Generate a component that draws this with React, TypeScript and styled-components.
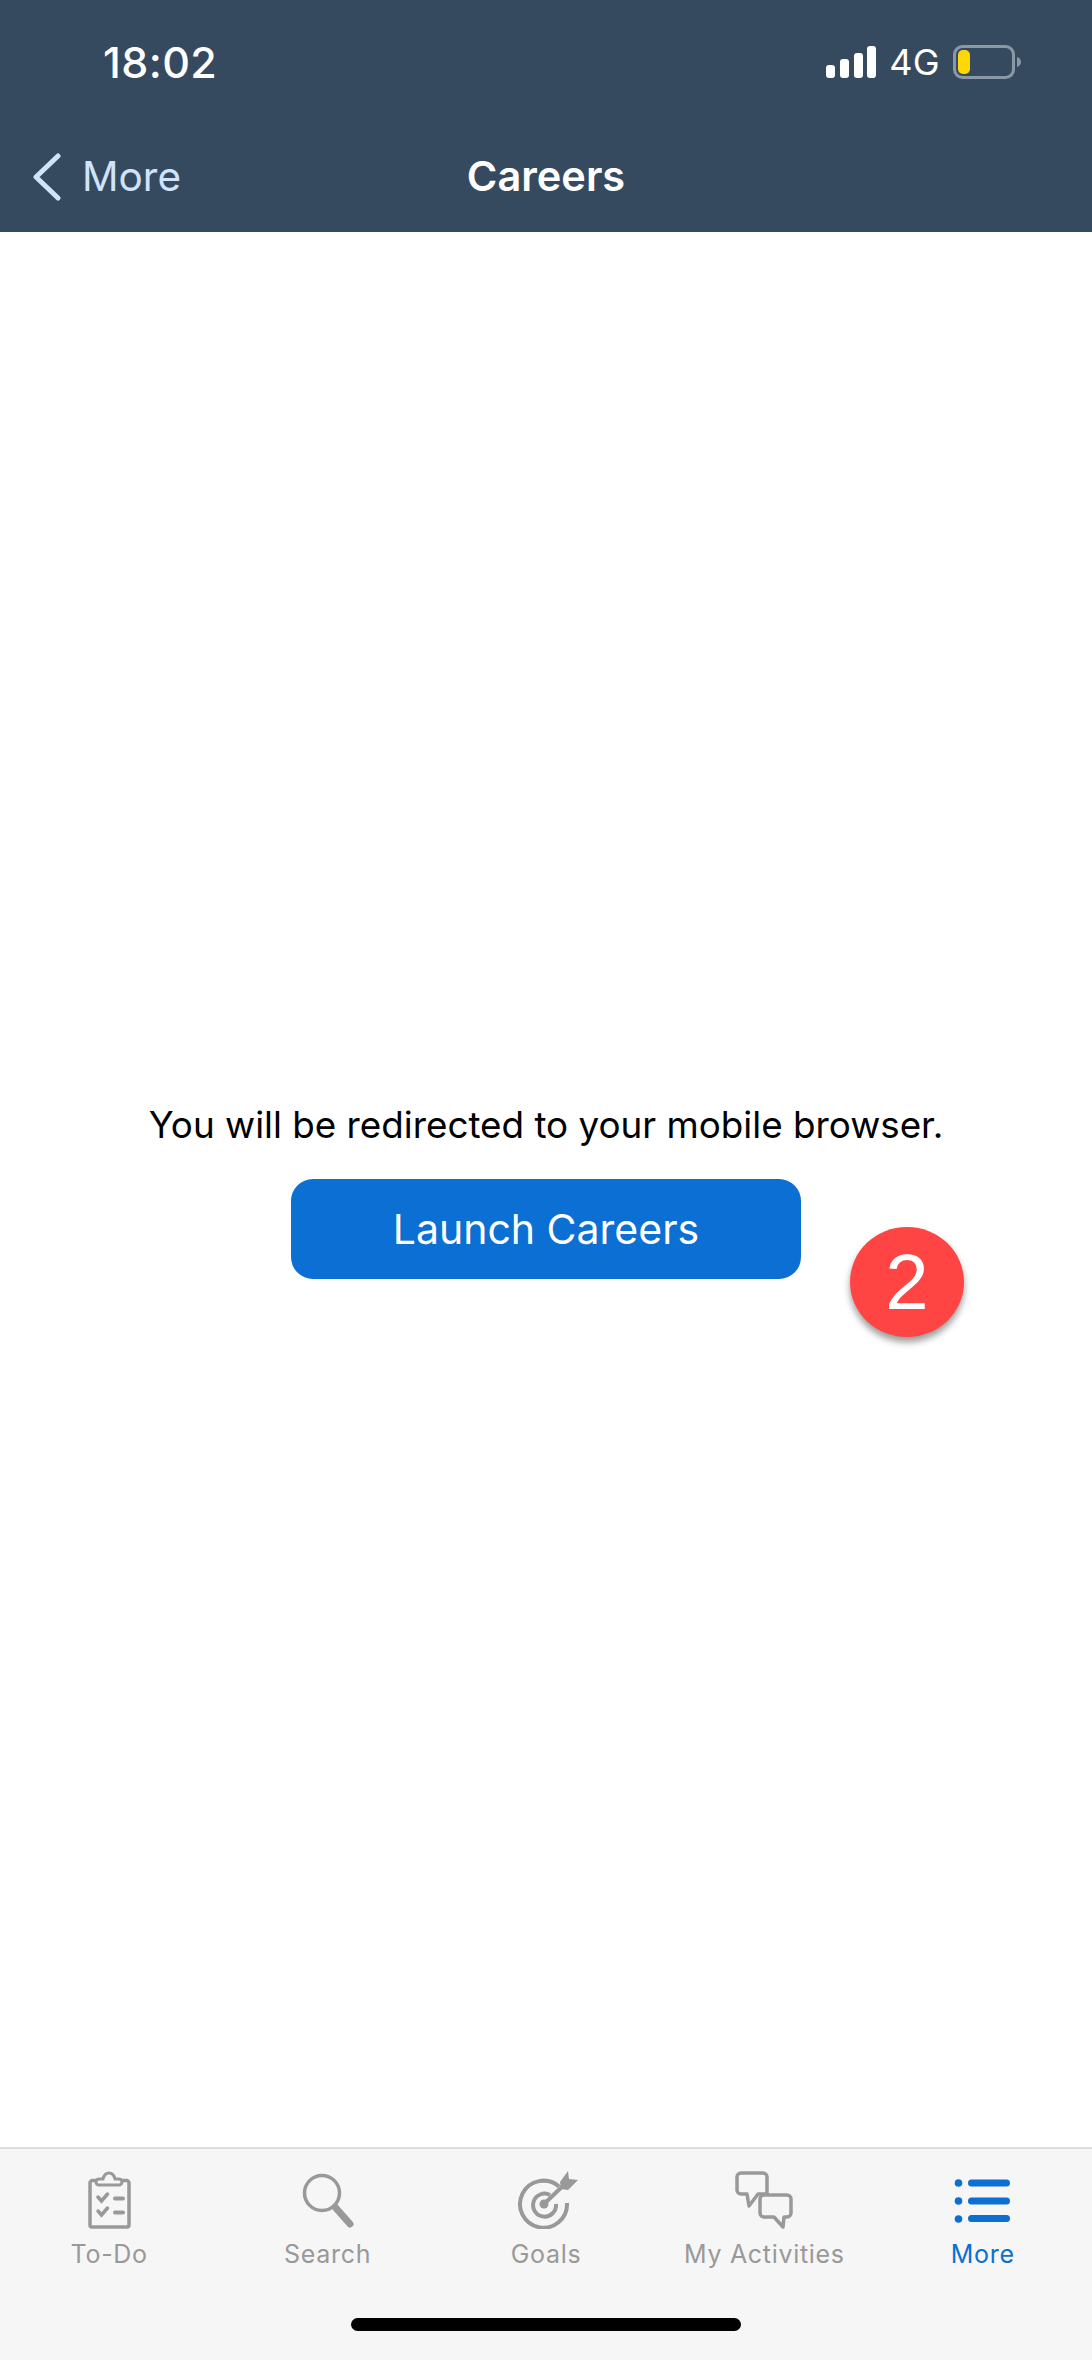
import {createGlobalStyle, styled} from "styled-components";

const GlobalStyle = createGlobalStyle`
    html, body {
        margin: 0;
        padding: 0;
        background: #fff;
    }
    * {
        box-sizing: border-box;
    }
`

const Screen = styled.div`
    display: flex;
    flex-direction: column;
    width: 1092px;
    height: 2360px;
    overflow: hidden;
    font-family: Inter, "Liberation Sans", sans-serif;
`

//header start
const Header = styled.header`
    display: flex;
    flex-direction: column;
    height: 232px;
    background-color: #364a5f;
    color: #fff;
`
const StatusBar = styled.div`
    display: flex;
    align-items: center;
    justify-content: space-between;
    height: 62px;
    margin-top: 31px;
    padding: 0 71px 0 103px;
`
const Clock = styled.span`
    font-size: 43px;
    font-weight: 500;
    line-height: 1;
    letter-spacing: 0.4px;
`
const StatusIcons = styled.div`
    display: flex;
    align-items: center;
    gap: 13px;
`
const Network = styled.span`
    font-size: 36px;
    line-height: 1;
    letter-spacing: 0.3px;
`
const NavBar = styled.nav`
    display: grid;
    grid-template-columns: 1fr auto 1fr;
    align-items: center;
    height: 64px;
    margin-top: 52px;
`
const BackLink = styled.div`
    display: flex;
    align-items: center;
    gap: 21px;
    padding-left: 32px;
    color: #cfe3fb;
    font-size: 40.5px;
    line-height: 1;
`
const Title = styled.h1`
    margin: 0;
    font-size: 41.5px;
    font-weight: 600;
    line-height: 1;
`
//header end

const Main = styled.main`
    flex: 1;
    display: flex;
    flex-direction: column;
    align-items: center;
    justify-content: center;
    padding-top: 1px;
`
const Message = styled.p`
    margin: 0 0 31px 0;
    color: #000;
    font-size: 36.8px;
    line-height: 46px;
`
const ButtonWrap = styled.div`
    position: relative;
`
const LaunchButton = styled.button`
    display: block;
    width: 510px;
    height: 100px;
    border: 0;
    border-radius: 22px;
    background-color: #0b6fd3;
    color: #fff;
    font-family: inherit;
    font-size: 41px;
`
const Badge = styled.div`
    position: absolute;
    left: 559px;
    top: 48px;
    display: flex;
    align-items: center;
    justify-content: center;
    width: 114px;
    height: 110px;
    border-radius: 50%;
    background-color: #ff4444;
    box-shadow: 0 5px 7px rgba(0, 0, 0, 0.4);
    color: #fff;
    font-family: "Liberation Sans", sans-serif;
    font-size: 78px;
    line-height: 1;
`

//tab bar
const TabBar = styled.footer`
    display: flex;
    flex-direction: column;
    height: 213px;
    border-top: 2px solid #dcdcdc;
    background-color: #f6f6f6;
`
const Tabs = styled.div`
    display: grid;
    grid-template-columns: repeat(5, 1fr);
    padding-top: 22px;
`
const Tab = styled.div<{ $active?: boolean }>`
    display: flex;
    flex-direction: column;
    align-items: center;
    gap: 10px;
    color: ${(p) => (p.$active ? "#0b6fd3" : "#999999")};
    font-size: 25px;
    line-height: 30px;
    letter-spacing: 0.7px;
`
const TabIcon = styled.svg`
    display: block;
    width: 70px;
    height: 58px;
`
const HomeIndicator = styled.div`
    align-self: center;
    width: 390px;
    height: 13px;
    margin-top: 49px;
    border-radius: 7px;
    background-color: #000;
`

function SignalIcon() {
    return (
        <svg width="50" height="32" viewBox="0 0 50 32" fill="#fff">
            <rect x="0" y="19" width="9" height="13" rx="3"/>
            <rect x="14" y="13" width="9" height="19" rx="3"/>
            <rect x="28" y="7" width="9" height="25" rx="3"/>
            <rect x="41" y="0" width="9" height="32" rx="3"/>
        </svg>
    )
}

function BatteryIcon() {
    return (
        <svg width="68" height="34" viewBox="0 0 68 34" fill="none">
            <rect x="1.5" y="1.5" width="59" height="31" rx="8" stroke="#8a97a5" strokeWidth="3"/>
            <rect x="5" y="5" width="12" height="24" rx="5" fill="#ffd60a"/>
            <path d="M64 12c2.500 .8 4 2.600 4 5s-1.500 4.200-4 5z" fill="#8a97a5"/>
        </svg>
    )
}

function TodoIcon() {
    return (
        <TabIcon viewBox="0 0 70 58" fill="none" stroke="currentColor">
            <path d="M26 9.500h-8a3 3 0 0 0-2 2V54a2 2 0 0 0 2 2h35a2 2 0 0 0 2-2V11.500a3 3 0 0 0-2-2h-8" strokeWidth="3.500"/>
            <path d="M25 14h20a2.500 2.500 0 0 0 0-6h-4c-1-4-3.500-6-6-6s-5 2-6 6h-4a2.500 2.500 0 0 0 0 6z" strokeWidth="3" fill="#f6f6f6"/>
            <path d="M24 26l3.500 4 6-7M24 40l3.500 4 6-7" strokeWidth="3.500" strokeLinecap="round"/>
            <path d="M41 27.500h8M41 41.500h8" strokeWidth="4" strokeLinecap="round"/>
        </TabIcon>
    )
}

function SearchIcon() {
    return (
        <TabIcon viewBox="0 0 70 58" fill="none" stroke="currentColor">
            <circle cx="29" cy="22" r="17.500" strokeWidth="3.500"/>
            <path d="M42 36l15 17" strokeWidth="7" strokeLinecap="round"/>
        </TabIcon>
    )
}

function GoalsIcon() {
    return (
        <TabIcon viewBox="0 0 70 58" fill="none" stroke="currentColor">
            <path d="M48 15.500A23.500 23.500 0 1 0 56 32" strokeWidth="4"/>
            <path d="M39 24A11.500 11.500 0 1 0 45 33" strokeWidth="4"/>
            <circle cx="33" cy="33" r="4.500" fill="currentColor" stroke="none"/>
            <path d="M33 33L56 11" strokeWidth="4" strokeLinecap="round"/>
            <path d="M49 11l8-11 1 8 9 1-10 10-7-1z" fill="currentColor" stroke="none"/>
        </TabIcon>
    )
}

function ActivitiesIcon() {
    return (
        <TabIcon viewBox="0 0 70 58" fill="none" stroke="currentColor" strokeWidth="3.500" strokeLinejoin="round">
            <path d="M12 2h22a4 4 0 0 1 4 4v17H29l-9 12-2-12h-6a4 4 0 0 1-4-4V6a4 4 0 0 1 4-4z"/>
            <path d="M35 24h23a4 4 0 0 1 4 4v14a4 4 0 0 1-4 4h-3l-1 10-9-10H35a4 4 0 0 1-4-4V28a4 4 0 0 1 4-4z" fill="#f6f6f6"/>
        </TabIcon>
    )
}

function MoreIcon() {
    return (
        <TabIcon viewBox="0 0 70 58" fill="currentColor" stroke="none">
            <circle cx="10.500" cy="12" r="3.800"/>
            <circle cx="10.500" cy="30" r="3.800"/>
            <circle cx="10.500" cy="48" r="3.800"/>
            <rect x="20" y="8.500" width="42" height="7" rx="3.500"/>
            <rect x="20" y="26.500" width="42" height="7" rx="3.500"/>
            <rect x="20" y="44" width="42" height="7" rx="3.500"/>
        </TabIcon>
    )
}

export default function App() {
    return (
        <Screen>
            <GlobalStyle/>
            <Header>
                <StatusBar>
                    <Clock>18:02</Clock>
                    <StatusIcons>
                        <SignalIcon/>
                        <Network>4G</Network>
                        <BatteryIcon/>
                    </StatusIcons>
                </StatusBar>
                <NavBar>
                    <BackLink>
                        <svg width="29" height="48" viewBox="0 0 29 48" fill="none" stroke="#cfe3fb" strokeWidth="5" strokeLinecap="round" strokeLinejoin="round">
                            <path d="M26 3L4 24l22 21"/>
                        </svg>
                        More
                    </BackLink>
                    <Title>Careers</Title>
                </NavBar>
            </Header>
            <Main>
                <Message>You will be redirected to your mobile browser.</Message>
                <ButtonWrap>
                    <LaunchButton>Launch Careers</LaunchButton>
                    <Badge>2</Badge>
                </ButtonWrap>
            </Main>
            <TabBar>
                <Tabs>
                    <Tab><TodoIcon/>To-Do</Tab>
                    <Tab><SearchIcon/>Search</Tab>
                    <Tab><GoalsIcon/>Goals</Tab>
                    <Tab><ActivitiesIcon/>My Activities</Tab>
                    <Tab $active><MoreIcon/>More</Tab>
                </Tabs>
                <HomeIndicator/>
            </TabBar>
        </Screen>
    )
}
